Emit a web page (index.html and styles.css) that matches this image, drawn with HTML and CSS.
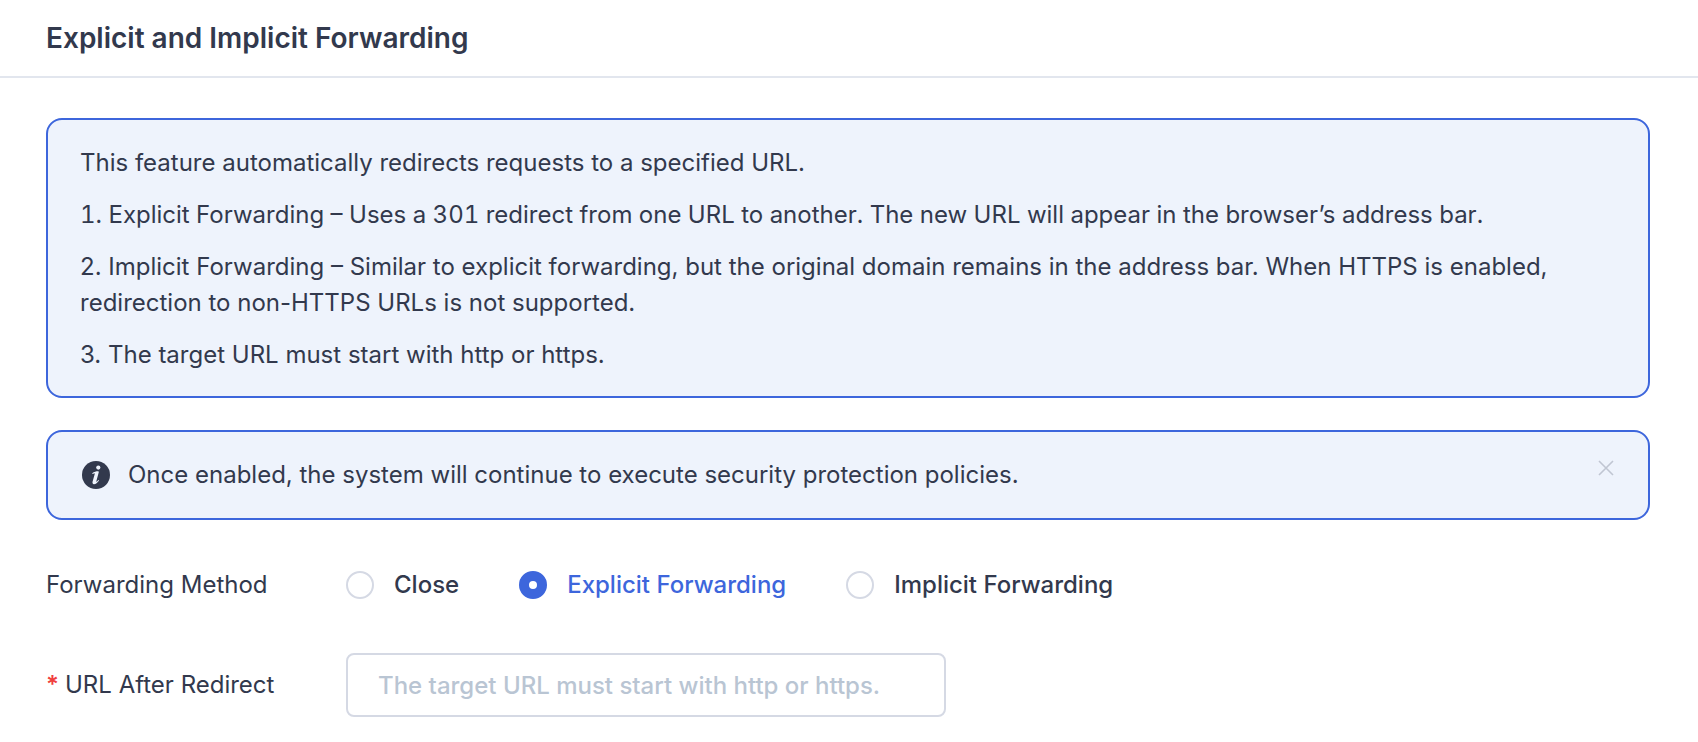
FILE: index.html
```html
<!DOCTYPE html>
<html lang="en">
<head>
<meta charset="utf-8">
<meta name="viewport" content="width=device-width, initial-scale=1">
<title>Explicit and Implicit Forwarding</title>
<link rel="stylesheet" href="styles.css">
</head>
<body>
<header class="page-header">
  <h1 class="page-title">Explicit and Implicit Forwarding</h1>
</header>
<main class="content">
  <section class="notice">
    <p>This feature automatically redirects requests to a specified URL.</p>
    <p class="numeric">1. Explicit Forwarding – Uses a 301 redirect from one URL to another. The new URL will appear in the browser’s address bar.</p>
    <p>2. Implicit Forwarding – Similar to explicit forwarding, but the original domain remains in the address bar. When HTTPS is enabled, redirection to non-HTTPS URLs is not supported.</p>
    <p>3. The target URL must start with http or https.</p>
  </section>
  <section class="notice alert">
    <svg class="alert-icon" viewBox="0 0 28 28" aria-hidden="true">
      <circle cx="14" cy="14" r="14" fill="#32394d"/>
      <circle cx="16.3" cy="6.6" r="2.1" fill="#eef3fc"/>
      <path d="M10.2 12.2C12 10.8 14.4 10.2 15.8 10.2C16.8 10.2 16.9 10.8 16.7 11.6L14.4 20C14.2 20.9 14.5 20.9 15 20.4L16.4 18.9L17.1 19.5C15.4 21.8 13.7 23.2 12 23.2C10.6 23.2 10.2 22 10.6 20.6L12.6 13.4C12.9 12.4 12.6 12.2 12 12.4L10.5 13.1Z" fill="#eef3fc"/>
    </svg>
    <p class="alert-text">Once enabled, the system will continue to execute security protection policies.</p>
    <button class="alert-close" type="button" aria-label="Dismiss">
      <svg viewBox="0 0 16 16" width="16" height="16" aria-hidden="true"><path d="M1 1L15 15M15 1L1 15" stroke="#c0c6d2" stroke-width="1.6" fill="none"/></svg>
    </button>
  </section>
  <form class="form">
    <div class="row" role="radiogroup" aria-labelledby="method">
      <span class="label" id="method">Forwarding Method</span>
      <div class="options">
        <label class="option"><input type="radio" name="method">Close</label>
        <label class="option"><input type="radio" name="method" checked>Explicit Forwarding</label>
        <label class="option"><input type="radio" name="method">Implicit Forwarding</label>
      </div>
    </div>
    <div class="row">
      <label class="label" for="url"><span class="required">*</span>URL After Redirect</label>
      <input class="text-input" id="url" type="text" placeholder="The target URL must start with http or https.">
    </div>
  </form>
</main>
</body>
</html>
```
FILE: styles.css
```css
* { box-sizing: border-box; }

body {
  margin: 0;
  background: #fff;
  color: #32394d;
  font-family: Inter, "Liberation Sans", sans-serif;
  font-size: 24px;
  line-height: 36px;
}

p { margin: 0; }

.page-header {
  padding: 20px 46px;
  border-bottom: 2px solid #e2e6ee;
}

.page-title {
  margin: 0;
  font-size: 28px;
  font-weight: 600;
}

.content { padding: 40px 48px 24px 46px; }

.notice {
  display: flex;
  flex-direction: column;
  gap: 16px;
  padding: 25px 32px 23px;
  border: 2px solid #3d66dc;
  border-radius: 16px;
  background: #eef3fc;
}

.numeric { font-variant-numeric: tabular-nums; }

.alert {
  flex-direction: row;
  align-items: center;
  gap: 18px;
  margin-top: 32px;
  padding: 25px 34px;
}

.alert-icon {
  flex: none;
  width: 28px;
  height: 28px;
}

.alert-text { flex: 1; }

.alert-close {
  display: flex;
  align-self: flex-start;
  padding: 3px 0;
  border: 0;
  background: none;
  cursor: pointer;
}

.form {
  display: flex;
  flex-direction: column;
  gap: 36px;
  margin-top: 33px;
}

.row {
  display: flex;
  align-items: center;
  min-height: 64px;
}

.label {
  flex: none;
  width: 300px;
}

.required {
  display: inline-block;
  width: 19px;
  color: #f03e3e;
  font-weight: 600;
}

.options {
  display: flex;
  flex-wrap: wrap;
  gap: 60px;
}

.option {
  display: flex;
  align-items: center;
  gap: 20px;
  font-weight: 500;
}

.option:has(input:checked) { color: #3d66dc; }

.option input {
  appearance: none;
  width: 28px;
  height: 28px;
  margin: 0;
  border: 2px solid #d5d9e4;
  border-radius: 50%;
  background: #fff;
}

.option input:checked { border: 10px solid #3d66dc; }

.text-input {
  flex: 0 1 600px;
  min-width: 0;
  height: 64px;
  padding: 0 30px;
  border: 2px solid #d5d9e4;
  border-radius: 8px;
  background: #fff;
  color: inherit;
  font: inherit;
  font-weight: 500;
}

.text-input::placeholder { color: #b9c5d3; opacity: 1; }
```
